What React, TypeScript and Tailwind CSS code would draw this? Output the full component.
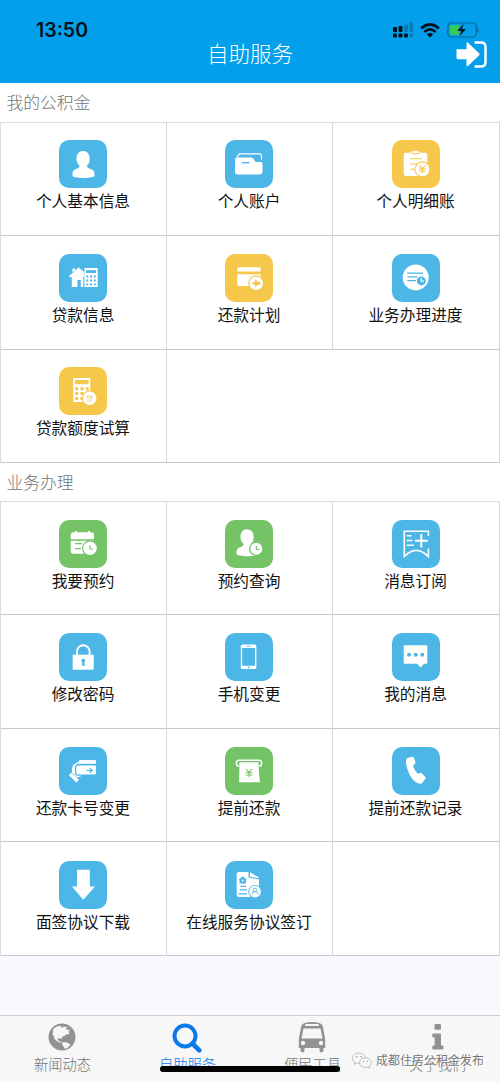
import React from "react";
import clsx from "clsx";

type Tone = "blue" | "yellow" | "green";

interface Service {
  label: string;
  tone: Tone;
  icon: React.ReactNode;
}

interface ServiceRow {
  className: string;
  items: (Service | null)[];
}

const tones: Record<Tone, string> = {
  blue: "bg-[#4cb6e7] text-[#4cb6e7]",
  yellow: "bg-[#f5c74b] text-[#f5c74b]",
  green: "bg-[#74c367] text-[#74c367]",
};

// All tile icons share a 48x48 grid. White is the drawing, currentColor is the tile.
const Yuan = ({ x, y }: { x: number; y: number }) => (
  <path
    transform={`translate(${x} ${y})`}
    d="M-3-4L0-.6L3-4M0-.6V4M-3.4-.2H3.4M-3.4 2H3.4"
    fill="none"
    stroke="currentColor"
    strokeWidth="1.1"
  />
);

const Clock = ({ x, y, r }: { x: number; y: number; r: number }) => (
  <g transform={`translate(${x} ${y})`}>
    <circle r={r + 1.2} fill="currentColor" />
    <circle r={r} />
    <path d="M0-3V.7H3" fill="none" stroke="currentColor" strokeWidth="1.1" />
  </g>
);

const person = (
  <path d="M24 11c-4 0-6.500 3-6.500 7.500c0 3.300 1.200 5.500 3 7.200c-.1 1.500-.7 2.200-2.200 2.700c-3 .9-4.800 2.400-4.800 5.100v2.200c0 1.300 5 2.200 10.800 2.200s11.200-.9 11.200-2.200v-2.200c0-2.700-1.900-4.200-5.100-5.100c-1.500-.5-2.300-1.200-2.400-2.700c1.900-1.700 2.700-3.900 2.700-7.200C30.700 14 28 11 24 11z" />
);

const folder = (
  <>
    <path d="M12 17l2.600-3.200H34.500q2 0 2 2V20" fill="none" stroke="#fff" strokeWidth="1.200" />
    <path d="M12 17.600H26.500q1.500 0 2.300 1.600l1 1.800q.5.900 1.700.9H35.500q2 0 2 2V32q0 2.400-2.400 2.400H12.400Q10 34.400 10 32V19.600q0-2 2-2z" />
    <path d="M17 22.700H24.500" stroke="currentColor" strokeWidth="1.400" />
  </>
);

const ledger = (
  <>
    <path d="M14 12.700H18.500V11.700H20.500L21.500 10.800H25.500L26.500 11.700H28.500V12.700H33q2.300 0 2.300 2.300V33.700q0 2.300-2.300 2.300H14q-2.300 0-2.300-2.300V15q0-2.300 2.300-2.300z" />
    <path d="M19 12.700q4.500 2.600 9 0M18 18.800H30M18 24H25M18 29.300H23" fill="none" stroke="currentColor" strokeWidth="1.100" />
    <circle cx="30.400" cy="29.300" r="8" fill="currentColor" />
    <circle cx="30.400" cy="29.300" r="6.900" />
    <Yuan x={30.4} y={29.3} />
  </>
);

const houseCalculator = (
  <>
    <path d="M19.700 13.400L10 22l1 1.500 1.800-.8V33h5.700v-7h3.300v7H24.300V23l1-.6V18.200zM13.500 14.500h2.700v2.600l-2.700 2.400z" />
    <path d="M25.400 14H38.700V33H25.400z" />
    <path d="M27 16.200H37V19H27z" fill="currentColor" />
    <path d="M27.300 22.500H37M27.300 26.500H37M27.300 30.400H37" stroke="currentColor" strokeWidth="1.900" strokeDasharray="1.900 1.900" />
  </>
);

const repayPlan = (
  <>
    <path d="M14.300 13.300H34q1.700 0 1.700 1.700V17.500H12.300V15q0-1.700 2-1.700zM12.300 20.300H35.700V32H14.300q-2 0-2-2z" />
    <circle cx="31.200" cy="29.300" r="8" fill="currentColor" />
    <circle cx="31.200" cy="29.300" r="6.800" />
    <path d="M30.800 25l1.500 2.800h3v3H32.300l-1.500 2.800-1.300-2.800-3-1.500 3-1.500z" fill="currentColor" />
  </>
);

const progress = (
  <>
    <circle cx="23.700" cy="23.400" r="13" />
    <path d="M15.300 19.200H31M15.300 22.900H25.300M15.300 26.700H24" stroke="currentColor" strokeWidth="1.200" />
    <circle cx="29.300" cy="26.900" r="5.400" />
    <circle cx="29.300" cy="26.900" r="4.500" fill="currentColor" />
    <path d="M29.300 23.800V27.200H32" fill="none" stroke="#fff" strokeWidth="1.200" />
  </>
);

const loanCalculator = (
  <>
    <path d="M14.300 11H31.300V35H14.300z" />
    <path d="M16 13H29.600V17.200H16z" fill="currentColor" />
    <path d="M16.200 21.700H30M16.200 26.600H30M16.200 31.500H30" stroke="currentColor" strokeWidth="3" strokeDasharray="3 2.300" />
    <circle cx="30.700" cy="31.300" r="7.800" fill="currentColor" />
    <circle cx="30.700" cy="31.300" r="6.700" />
    <text x="30.700" y="34" textAnchor="middle" fontSize="7" fill="currentColor">贷</text>
  </>
);

const calendar = (
  <>
    <path d="M11.700 19.200V15q0-2.700 2.700-2.700H16V11h2v1.300H29V11h2v1.300h1.300Q35 12.300 35 15v4.200zM11.700 20.800H35V33.700H14.400q-2.700 0-2.700-2.700z" />
    <path d="M16 23.700H23M16 28.700H22" stroke="currentColor" strokeWidth="1.200" />
    <Clock x={31} y={28.3} r={6.8} />
  </>
);

const personClock = (
  <>
    <g transform="translate(-2 -1.700)">{person}</g>
    <Clock x={31.3} y={28.8} r={6} />
  </>
);

const subscribe = (
  <g fill="none" stroke="#fff">
    <path d="M36.400 16V11.300H12.300V36.300L16.500 33Q24.300 27.800 32 33L36.400 36.500V28.500" strokeWidth="1.600" />
    <path d="M23 20.700H35.800M29.300 14V27.500" strokeWidth="2" />
    <path d="M14.700 15.800H19.500M14.700 20.500H20.500M14.700 25.200H22" strokeWidth="1.500" />
  </g>
);

const lock = (
  <>
    <path d="M18 22V18.500a6.300 6.300 0 0 1 12.600 0V22" fill="none" stroke="#fff" strokeWidth="1.900" />
    <path d="M13.700 21.700H34.700V36.700H13.700z" />
    <circle cx="24.300" cy="27.700" r="1.900" fill="currentColor" />
    <path d="M23.500 28h1.700l.5 4.700h-2.700z" fill="currentColor" />
  </>
);

const phone = (
  <>
    <rect x="15.800" y="11.600" width="15.600" height="24.500" rx="1.500" />
    <path d="M17.200 15H30V32.800H17.200z" fill="currentColor" />
    <path d="M21.500 13.300H25.700" stroke="currentColor" strokeWidth=".8" />
    <circle cx="23.600" cy="34.400" r=".9" fill="currentColor" />
  </>
);

const chat = (
  <>
    <path d="M12.700 12.300H34.300q1 0 1 1V29.700q0 1-1 1H32L28.600 34.500 25.200 30.700H12.700q-1 0-1-1V13.300q0-1 1-1z" />
    <g fill="currentColor">
      <circle cx="17" cy="21.700" r="2" />
      <circle cx="23.700" cy="21.700" r="2" />
      <circle cx="30.300" cy="21.700" r="2" />
    </g>
  </>
);

const cardHand = (
  <>
    <path d="M20.500 13H36q1 0 1 1V16.800H18.500zM19 18.600H36q1 0 1 1V26.500q0 1-1 1H19q-1.700 0-1.700-1.600V20.200q0-1.600 1.700-1.600z" />
    <path d="M21.500 13.800L15.300 17.200Q13 18.500 13 21.500V25.700L18 30.500 23.500 28.700H18.500Q15.900 28.700 15.900 26V20.500Q15.900 18.300 18 17.200z" />
    <path d="M12.300 25.700L20 32.700 17.500 35.500 9.800 28.300z" />
    <path d="M27.500 23.500H33M30.800 21.200L33.200 23.500 30.800 25.800" fill="none" stroke="currentColor" strokeWidth="1.200" />
  </>
);

const cashOut = (
  <>
    <path d="M14 19q-2.600 0-2.600-2.600v-.5q0-2.700 2.600-2.700H34q2.600 0 2.600 2.700v.5Q36.600 19 34 19" fill="none" stroke="#fff" strokeWidth="1.500" />
    <path d="M14.400 15.200H33.600V21L35 35.200H14L14.400 21z" />
    <Yuan x={24} y={26} />
  </>
);

const handset = (
  <path d="M16.300 10.700l3.700-.9q1.500-.2 2 1.100l1.400 4.200q.3 1-.6 1.800l-1.900 1.500q1.500 4.800 4.800 8.400l2.400-.9q1.200-.3 1.900.7l3.300 3.300q.8 1-.1 2l-2.400 3.300q-1 1.700-3.500 1.500Q19 34.500 15 21Q13.500 15 14.200 12.500Q14.600 11.100 16.300 10.700z" />
);

const download = <path d="M18 8.800H30.800V25.500H36L24.300 38.700 13 25.500H18z" />;

const agreement = (
  <>
    <path d="M13.700 11H23.500V16.500L34 18.500V36H13.700q-2 0-2-2V13q0-2 2-2z" />
    <path d="M25 11.300L34 16.500V17.300L25 15.800z" />
    <path d="M17.700 15.200L22 18.700H21V22.500H14.500V18.700H13.500z" fill="currentColor" />
    <circle cx="17.700" cy="19.600" r="1" />
    <path d="M15.500 25.300H21M14.800 28.900H22M13.500 32.800H22" stroke="currentColor" strokeWidth="1.200" />
    <circle cx="30" cy="30.700" r="6.800" fill="currentColor" />
    <circle cx="30" cy="30.700" r="5.900" />
    <g fill="none" stroke="currentColor" strokeWidth=".9">
      <circle cx="30" cy="28.900" r="1.800" />
      <path d="M26.900 33.700q0-3 3.100-3t3.100 3" />
    </g>
  </>
);

const myFund: ServiceRow[] = [
  {
    className: "h-[113px] pt-[17px]",
    items: [
      { label: "个人基本信息", tone: "blue", icon: person },
      { label: "个人账户", tone: "blue", icon: folder },
      { label: "个人明细账", tone: "yellow", icon: ledger },
    ],
  },
  {
    className: "h-[114px] pt-[17.5px]",
    items: [
      { label: "贷款信息", tone: "blue", icon: houseCalculator },
      { label: "还款计划", tone: "yellow", icon: repayPlan },
      { label: "业务办理进度", tone: "blue", icon: progress },
    ],
  },
  {
    className: "h-[113px] pt-[17px]",
    items: [{ label: "贷款额度试算", tone: "yellow", icon: loanCalculator }, null],
  },
];

const business: ServiceRow[] = [
  {
    className: "h-[113px] pt-[18px]",
    items: [
      { label: "我要预约", tone: "green", icon: calendar },
      { label: "预约查询", tone: "green", icon: personClock },
      { label: "消息订阅", tone: "blue", icon: subscribe },
    ],
  },
  {
    className: "h-[114px] pt-[18px]",
    items: [
      { label: "修改密码", tone: "blue", icon: lock },
      { label: "手机变更", tone: "blue", icon: phone },
      { label: "我的消息", tone: "blue", icon: chat },
    ],
  },
  {
    className: "h-[113px] pt-[18px]",
    items: [
      { label: "还款卡号变更", tone: "blue", icon: cardHand },
      { label: "提前还款", tone: "green", icon: cashOut },
      { label: "提前还款记录", tone: "blue", icon: handset },
    ],
  },
  {
    className: "h-[114px] pt-[18.5px]",
    items: [
      { label: "面签协议下载", tone: "blue", icon: download },
      { label: "在线服务协议签订", tone: "blue", icon: agreement },
      null,
    ],
  },
];

const ServiceGrid = ({ rows }: { rows: ServiceRow[] }) => (
  <div className="border-t border-l border-[#dcdcde]">
    {rows.map((row, i) => (
      <div key={i} className="grid grid-cols-[166px_166px_167px]">
        {row.items.map((item, j) => (
          <div
            key={j}
            className={clsx(
              "flex flex-col items-center border-r border-b border-r-[#d8d8da] border-b-[#c9c9cb]",
              row.className,
              row.items.length === 2 && j === 1 && "col-span-2"
            )}
          >
            {item && (
              <>
                <div className={clsx("mr-px size-12 shrink-0 rounded-[10px]", tones[item.tone])}>
                  <svg viewBox="0 0 48 48" className="size-12" fill="#fff">
                    {item.icon}
                  </svg>
                </div>
                <span className="mt-px mr-px text-[15.700px] leading-6 whitespace-nowrap text-[#111]">
                  {item.label}
                </span>
              </>
            )}
          </div>
        ))}
      </div>
    ))}
  </div>
);

const StatusBar = () => (
  <div className="flex h-10 items-end justify-between pr-[20px] pl-[36px]">
    <span className="font-[Inter] text-[19.500px] leading-5 font-semibold text-[#07131c]">13:50</span>
    <div className="flex h-5 items-center gap-[7px] text-[#07131c]">
      <svg width="20" height="16" viewBox="0 0 20 16" fill="currentColor">
        <rect x="0" y="5" width="4" height="5" rx="1" />
        <rect x="5.500" y="4" width="4" height="6" rx="1" />
        <rect x="11" y="2.500" width="4" height="7.500" rx="1" opacity=".25" />
        <rect x="16.500" y="0" width="3.500" height="10" rx="1" opacity=".25" />
        <rect x="0" y="11.500" width="4" height="4" rx="1" />
        <rect x="5.500" y="11.500" width="4" height="4" rx="1" />
        <rect x="11" y="11.500" width="4" height="4" rx="1" />
        <rect x="16.500" y="11.500" width="3.500" height="4" rx="1" opacity=".25" />
      </svg>
      <svg width="20" height="15" viewBox="0 0 20 15" fill="none" stroke="currentColor">
        <path d="M1.200 5.400Q10-2.400 18.800 5.400" strokeWidth="2.800" />
        <path d="M4.300 8.900Q10 4 15.700 8.900" strokeWidth="2.600" />
        <path d="M6.800 11.200Q10 8.600 13.200 11.200L10 14.600z" fill="currentColor" stroke="none" />
      </svg>
      <svg width="33" height="16" viewBox="0 0 33 16">
        <rect x=".8" y="1" width="28.500" height="14" rx="4" fill="none" stroke="#07131c" strokeOpacity=".4" strokeWidth="1.200" />
        <path d="M5 3H13L10.500 8.500H13L12 13H5Q2.800 13 2.800 10.800V5.200Q2.800 3 5 3z" fill="#35cb5b" />
        <path d="M16.700 1.800L10.300 9H14.200L12.500 14.300 19 7H15z" fill="currentColor" />
        <path d="M30.500 5.500Q32.600 8 30.500 10.500z" fill="currentColor" opacity=".45" />
      </svg>
    </div>
  </div>
);

const EarthIcon = () => (
  <svg className="mr-px" width="28" height="28" viewBox="0 0 28 28">
    <circle cx="14" cy="14" r="13.500" fill="#929292" />
    <path
      d="M5.500 5.500L9 3.500 13 2.800 13.500 5 16 3.500 20 4.500 17.500 5.500 19.500 7 22 6.500 20.500 9 21.500 11 18 11.500 16.500 13 14.500 13.500 13.500 16 11.500 15 9.500 16 10.500 18 12.500 18.500 13.500 20 10 19 6.500 16 5.500 12.500 4.500 11z"
      fill="#f7f7f7"
    />
    <path d="M14.500 19L19 19.500 22.500 21.500 20.500 24 17 26 15.500 23.500 14 21.500z" fill="#f7f7f7" />
  </svg>
);

const SearchIcon = () => (
  <svg className="mt-[2px] mr-px" width="30" height="30" viewBox="0 0 30 30" fill="none" stroke="#0a7aea">
    <circle cx="13" cy="13" r="10.500" strokeWidth="4" />
    <path d="M20.500 20.500L27.300 27.300" strokeWidth="4.600" strokeLinecap="round" />
  </svg>
);

const BusIcon = () => (
  <svg className="mr-px" width="28" height="32" viewBox="0 0 28 32" fill="#929292">
    <path d="M3 6Q3.500 1 14 1T25 6L27.200 18V27H25.500V29.500Q25.500 31.500 23.500 31.500T21.500 29.500V27H6.500V29.500Q6.500 31.500 4.500 31.500T2.500 29.500V27H.8V18z" />
    <rect x="7" y="3" width="14" height="2" rx="1" fill="#f7f7f7" />
    <path d="M5.500 7.500H22.500L24.500 17.500H3.500z" fill="#f7f7f7" />
    <circle cx="5" cy="22" r="2.200" fill="#f7f7f7" />
    <circle cx="23" cy="22" r="2.200" fill="#f7f7f7" />
  </svg>
);

const InfoIcon = () => (
  <svg width="12" height="26" viewBox="0 0 12 26" fill="#929292">
    <rect x="2.500" y="0" width="6.500" height="5.800" rx="1" />
    <path d="M1.300 9.500H8Q9 9.500 9 10.500V21.500H10.500Q11.500 21.500 11.500 22.500V24.500Q11.500 25.500 10.500 25.500H1.300Q.3 25.500.3 24.500V22.500Q.3 21.500 1.300 21.500H2.600V13.500H1.300Q.3 13.500.3 12.500V10.500Q.3 9.500 1.300 9.500z" />
  </svg>
);

const tabs = [
  { label: "新闻动态", icon: <EarthIcon />, active: false },
  { label: "自助服务", icon: <SearchIcon />, active: true },
  { label: "便民工具", icon: <BusIcon />, active: false },
  { label: "关于我们", icon: <InfoIcon />, active: false },
];

const SectionTitle = ({ children }: { children: React.ReactNode }) => (
  <h2 className="pt-px pl-[6.500px] text-[16.800px] leading-9 font-light text-[#757575]">{children}</h2>
);

const App: React.FC = () => {
  return (
    <div className="relative flex h-[1082px] w-[500px] flex-col overflow-hidden bg-[#faf8fe] font-['Noto_Sans_CJK_SC',sans-serif]">
      <header className="h-[83px] shrink-0 bg-[#039fea]">
        <StatusBar />
        <div className="grid h-7 grid-cols-[1fr_auto_1fr] items-center">
          <h1 className="col-start-2 -mt-[2px] text-[21.500px] leading-7 font-light text-white">自助服务</h1>
          <svg className="mr-[13px] justify-self-end" width="31" height="27" viewBox="0 0 31 27">
            <path d="M.5 8.300H10.500V2.300Q10.500.6 12 1.700L23.200 12.300Q24.200 13.300 23.200 14.300L12 25Q10.500 26 10.500 24.300V18.300H2Q.5 18.300 .5 16.800z" fill="#fff" />
            <path d="M18.500 1.600H25Q29.500 1.600 29.500 6.100V20.900Q29.500 25.400 25 25.400H18.500" fill="none" stroke="#fff" strokeWidth="2.500" />
          </svg>
        </div>
      </header>

      <main className="bg-white">
        <section>
          <div className="h-[39px]">
            <SectionTitle>我的公积金</SectionTitle>
          </div>
          <ServiceGrid rows={myFund} />
        </section>
        <section>
          <div className="h-[38px]">
            <SectionTitle>业务办理</SectionTitle>
          </div>
          <ServiceGrid rows={business} />
        </section>
      </main>

      <nav className="mt-auto grid h-[67px] shrink-0 grid-cols-4 border-t border-[#cfcbd2] bg-[#f7f7f7]">
        {tabs.map((tab) => (
          <div key={tab.label} className="flex flex-col items-center pt-[5px]">
            <div className="flex h-8 items-center">{tab.icon}</div>
            <span
              className={clsx(
                "mt-px text-[14.300px] leading-5 font-light",
                tab.active ? "text-[#0a7aea]" : "text-[#757575]"
              )}
            >
              {tab.label}
            </span>
          </div>
        ))}
      </nav>

      {/* home indicator */}
      <div className="absolute top-[1066px] left-[160px] h-[6px] w-[180px] rounded-full bg-black" />

      <div className="absolute top-[1051px] left-[352px] flex items-center gap-1">
        <svg width="20" height="17" viewBox="0 0 20 17" fill="#f7f7f7" stroke="#aaa" strokeWidth=".7">
          <path d="M7 1C3.300 1 .5 3.300.5 6.200Q.5 8.600 2.800 10.200L2.300 12.300 4.600 11.100Q5.800 11.500 7.200 11.400C11 11.300 13.500 9 13.500 6.200S10.700 1 7 1z" />
          <path d="M13.300 5.800C10 5.800 7.500 8 7.500 10.700S10 15.500 13.300 15.500Q14.500 15.500 15.500 15.100L17.700 16.200 17.200 14.300Q19.300 12.800 19.300 10.700C19.300 8 16.700 5.800 13.300 5.800z" />
          <g fill="#888" stroke="none">
            <circle cx="4.800" cy="4.800" r=".7" />
            <circle cx="9.200" cy="4.800" r=".7" />
            <circle cx="11.500" cy="9.300" r=".6" />
            <circle cx="15.300" cy="9.300" r=".6" />
          </g>
        </svg>
        <span className="text-[12px] leading-[18px] text-[#777] [text-shadow:1px_1px_0_#fff]">
          成都住房公积金发布
        </span>
      </div>
    </div>
  );
};

export default App;
